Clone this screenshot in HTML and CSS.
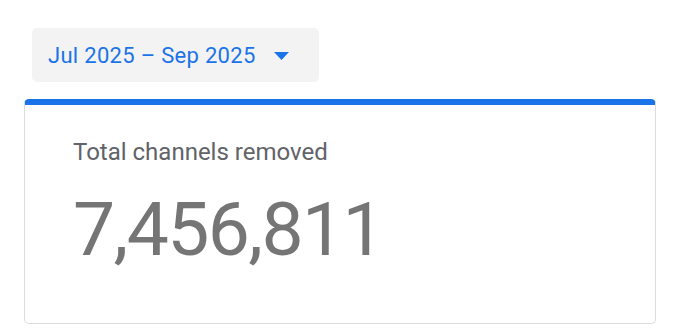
FILE: index.html
```html
<!DOCTYPE html>
<html lang="en">
<head>
<meta charset="utf-8">
<link rel="stylesheet" href="styles.css">
</head>
<body>
<div class="page">
  <button class="range" type="button">
    <span class="range-label">Jul 2025 – Sep 2025</span>
    <svg class="range-arrow" width="15" height="8" viewBox="0 0 15 8" aria-hidden="true"><path d="M0 0h15L7.5 8z" fill="#1a73e8"/></svg>
  </button>
  <section class="card">
    <div class="card-title">Total channels removed</div>
    <div class="card-value">7,456,811</div>
  </section>
</div>
</body>
</html>
```

FILE: styles.css
```css
html, body {
  margin: 0;
  padding: 0;
  background: #ffffff;
}
body {
  font-family: Roboto, "Noto Sans", Arial, sans-serif;
  width: 680px;
  height: 335px;
  overflow: hidden;
}
.page {
  padding: 28px 24px 0 24px;
  display: flex;
  flex-direction: column;
  align-items: flex-start;
}
.range {
  margin-left: 8px;
  width: 287px;
  height: 54px;
  box-sizing: border-box;
  border: none;
  border-radius: 5px;
  background: #f3f3f4;
  display: flex;
  align-items: center;
  padding: 0 0 0 16px;
  font-family: inherit;
  cursor: pointer;
}
.range-label {
  font-size: 22px;
  color: #1a73e8;
  letter-spacing: 0.3px;
}
.range-arrow {
  margin-left: 18px;
  margin-top: 2px;
}
.card {
  margin-top: 17px;
  width: 632px;
  height: 225px;
  box-sizing: border-box;
  border: 1px solid #dadce0;
  border-top: 6px solid #1a73e8;
  border-radius: 5px;
  padding: 33px 0 0 48px;
}
.card-title {
  font-size: 24px;
  color: #606368;
  line-height: 28px;
}
.card-value {
  margin-top: 23px;
  font-size: 75px;
  line-height: 80px;
  color: #757575;
  letter-spacing: -1.6px;
}
```
